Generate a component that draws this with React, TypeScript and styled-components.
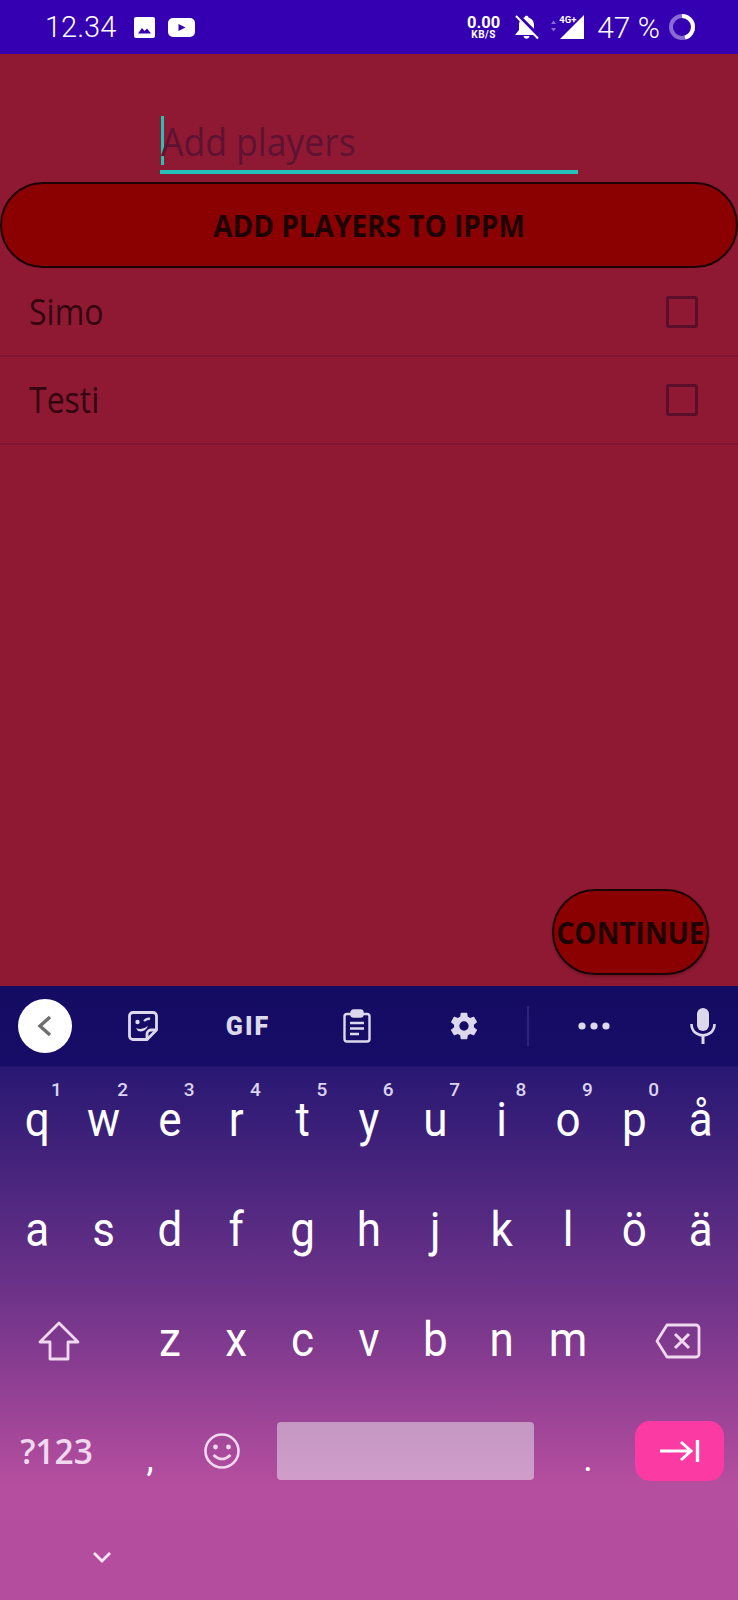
import React from "react";
import styled, { createGlobalStyle } from "styled-components";

const GlobalStyle = createGlobalStyle`
  html, body {
    margin: 0;
    padding: 0;
    background: #8f1933;
  }
  * {
    box-sizing: border-box;
  }
`;

const Screen = styled.div`
  width: 738px;
  height: 1600px;
  display: flex;
  flex-direction: column;
  overflow: hidden;
  font-family: "Open Sans", sans-serif;
`;

/* status bar */
const StatusBar = styled.div`
  height: 54px;
  flex: none;
  display: flex;
  align-items: center;
  padding: 0 42px 0 45px;
  background: #3500b1;
  color: #fff;
`;
const Clock = styled.span`
  font: 300 29px Roboto, sans-serif;
  margin-right: 18px;
`;
const StatusIcon = styled.svg`
  display: block;
  flex: none;
`;
const YoutubeIcon = styled(StatusIcon)`
  margin-left: 13px;
`;
const StatusRight = styled.div`
  margin-left: auto;
  display: flex;
  align-items: center;
`;
const Speed = styled.div`
  display: flex;
  flex-direction: column;
  align-items: center;
  font-family: Roboto, sans-serif;
  font-weight: 700;
  margin-right: 14px;
`;
const SpeedValue = styled.span`
  font-size: 16.5px;
  line-height: 15px;
`;
const SpeedUnit = styled.span`
  font-size: 10px;
  line-height: 10px;
  letter-spacing: 0.5px;
`;
const Network = styled.div`
  position: relative;
  width: 36px;
  height: 24px;
  margin: 0 13px 0 9px;
`;
const NetworkLabel = styled.span`
  position: absolute;
  left: 11px;
  top: -1px;
  font: 700 9.5px Roboto, sans-serif;
`;
const Battery = styled.span`
  font: 300 30px Roboto, sans-serif;
  margin-right: 8px;
`;

/* app content */
const Main = styled.main`
  flex: 1;
  display: flex;
  flex-direction: column;
  background: #8f1933;
`;
const InputWrap = styled.div`
  height: 62px;
  width: 418px;
  margin: 58px 0 0 160px;
  padding-left: 1px;
  border-bottom: 4px solid #24c2ba;
  display: flex;
  align-items: center;
  position: relative;
`;
const Caret = styled.i`
  position: absolute;
  left: 1px;
  top: 4px;
  width: 3px;
  height: 49px;
  background: #24c2ba;
`;
const Placeholder = styled.span`
  color: #5e1231;
  font-size: 35.5px;
  display: block;
  transform: scaleY(1.06);
`;
const Pill = styled.button<{ $wide?: boolean }>`
  display: flex;
  align-items: center;
  justify-content: center;
  height: 86px;
  width: ${(p) => (p.$wide ? "738px" : "157px")};
  padding: 0;
  border: 2px solid #1a0205;
  border-radius: 43px;
  background: #8b0000;
  color: #1d0205;
  font-family: "Open Sans", sans-serif;
  font-weight: 700;
  font-size: 28px;
  box-shadow: ${(p) => (p.$wide ? "none" : "0 2px 3px rgba(0,0,0,0.2)")};
`;
const PillText = styled.span`
  display: block;
  transform: scaleY(1.08);
`;
const AddButton = styled(Pill)`
  margin: 8px 0 1px;
  flex: none;
`;
const PlayerList = styled.ul`
  list-style: none;
  margin: 0;
  padding: 0;
`;
const PlayerRow = styled.li`
  height: 88px;
  display: flex;
  align-items: center;
  justify-content: space-between;
  padding: 0 40px 0 29px;
  border-bottom: 2px solid #7f142e;
`;
const PlayerName = styled.span`
  font-size: 32px;
  color: #33050f;
  display: block;
  margin-bottom: 3px;
  transform: scaleY(1.12);
`;
const Checkbox = styled.span`
  width: 32px;
  height: 32px;
  border: 3px solid #5a0e29;
  border-radius: 3px;
`;
const Footer = styled.div`
  margin-top: auto;
  padding: 0 29px 11px 0;
  display: flex;
  justify-content: flex-end;
`;

/* keyboard */
const Keyboard = styled.div`
  height: 614px;
  flex: none;
  display: flex;
  flex-direction: column;
  background: linear-gradient(180deg, #140b62 0, #170d68 80px, #281873 81px, #6e3389 310px, #b64e9f 500px, #b44d9e 100%);
`;
const Toolbar = styled.div`
  height: 80px;
  flex: none;
  display: grid;
  grid-template-columns: 90px 106px 104px 114px 100px 28px 104px 1fr;
  align-items: center;
  color: #dcd9ec;
`;
const ToolSlot = styled.div<{ $end?: boolean }>`
  display: flex;
  align-items: center;
  justify-content: ${(p) => (p.$end ? "flex-end" : "center")};
  padding-right: ${(p) => (p.$end ? "22px" : "0")};
`;
const BackCircle = styled.div`
  width: 54px;
  height: 54px;
  border-radius: 50%;
  background: #fff;
  display: flex;
  align-items: center;
  justify-content: center;
`;
const GifLabel = styled.span`
  font: 900 25px Roboto, sans-serif;
  letter-spacing: 2px;
`;
const Divider = styled.div`
  width: 2px;
  height: 40px;
  margin: 0 auto;
  background: #2c2478;
`;
const KeyRow = styled.div`
  height: 110px;
  flex: none;
  display: grid;
  grid-template-columns: repeat(11, 66.36px);
  padding-left: 4px;
`;
const Key = styled.div`
  position: relative;
  display: flex;
  align-items: center;
  justify-content: center;
  color: #fff;
  font: 400 44px/44px Roboto, sans-serif;
`;
const KeyGlyph = styled.span`
  display: block;
  margin-top: -2px;
  transform: scaleY(1.08);
`;
const Hint = styled.span`
  position: absolute;
  left: 47px;
  top: 14px;
  font: 500 19px/19px Roboto, sans-serif;
  color: #dcd4f0;
`;
const ShiftKey = styled.div`
  grid-column: span 2;
  display: flex;
  align-items: center;
  padding-left: 34px;
`;
const BackspaceKey = styled.div`
  grid-column: 10 / span 2;
  display: flex;
  align-items: center;
  justify-content: flex-end;
  padding-right: 33px;
`;
const BottomRow = styled.div`
  height: 110px;
  flex: none;
  display: flex;
  align-items: center;
  color: #fff;
`;
const SymbolsKey = styled.div`
  width: 113px;
  text-align: center;
  font: 600 33.5px "Open Sans", sans-serif;
  color: #f0d9ee;
`;
const PunctKey = styled.div<{ $w: number; $shift?: number }>`
  width: ${(p) => p.$w}px;
  text-align: center;
  font: 400 36px/42px Roboto, sans-serif;
  padding: 16px 0 0 ${(p) => p.$shift ?? 0}px;
`;
const EmojiKey = styled.div`
  width: 90px;
  padding-right: 20px;
  display: flex;
  justify-content: center;
`;
const SpaceBar = styled.div`
  width: 257px;
  height: 58px;
  border-radius: 4px;
  background: linear-gradient(180deg, #c597c3, #d09dca);
`;
const ActionKey = styled.div`
  width: 89px;
  height: 60px;
  border-radius: 15px;
  background: #fb3aa4;
  display: flex;
  align-items: center;
  justify-content: center;
`;
const NavRow = styled.div`
  flex: 1;
  padding: 40px 0 0 93px;
`;

const rowOne = [
  ["q", "1"], ["w", "2"], ["e", "3"], ["r", "4"], ["t", "5"], ["y", "6"],
  ["u", "7"], ["i", "8"], ["o", "9"], ["p", "0"], ["å", ""],
];
const rowTwo = ["a", "s", "d", "f", "g", "h", "j", "k", "l", "ö", "ä"];
const rowThree = ["z", "x", "c", "v", "b", "n", "m"];

const App = () => {
  return (
    <Screen>
      <GlobalStyle />
      <StatusBar>
        <Clock>12.34</Clock>
        <StatusIcon width="21" height="21" viewBox="0 0 21 21">
          <rect width="21" height="21" rx="2" fill="#fff" />
          <path d="M4 16.5 L8 11 L10.5 14 L13 11.5 L17 16.5 Z" fill="#3500b1" />
        </StatusIcon>
        <YoutubeIcon width="27" height="19" viewBox="0 0 27 19">
          <rect width="27" height="19" rx="5" fill="#fff" />
          <path d="M10.5 6 L17.5 9.5 L10.5 13 Z" fill="#3500b1" />
        </YoutubeIcon>
        <StatusRight>
          <Speed>
            <SpeedValue>0.00</SpeedValue>
            <SpeedUnit>KB/S</SpeedUnit>
          </Speed>
          <StatusIcon width="25" height="25" viewBox="0 0 25 25">
            <path d="M5 10 C5 5 8.5 3 10.5 2.6 C10.5 0 14.5 0 14.5 2.6 C17.5 3.4 20 6 20 10 L20 15 L24 20 L1 20 L5 15 Z" fill="#fff" />
            <path d="M9.5 21 H15.5 C15 24.5 10 24.5 9.5 21 Z" fill="#fff" />
            <path d="M3 0 L25 22" stroke="#3500b1" strokeWidth="4.5" />
            <path d="M2 1 L24 23.5" stroke="#fff" strokeWidth="2" />
          </StatusIcon>
          <Network>
            <NetworkLabel>4G+</NetworkLabel>
            <StatusIcon width="36" height="24" viewBox="0 0 36 24">
              <path d="M3 9 L5.5 5.5 L8 9 Z M3 13 L8 13 L5.5 16.5 Z" fill="#8a6bd6" />
              <path d="M36 0 V24 H12 Z" fill="#fff" />
            </StatusIcon>
          </Network>
          <Battery>47 %</Battery>
          <StatusIcon width="28" height="28" viewBox="0 0 28 28">
            <circle cx="14" cy="14" r="11" fill="none" stroke="#8a6bd6" strokeWidth="4" />
            <path d="M14 3 A11 11 0 0 1 17 24.6" fill="none" stroke="#fff" strokeWidth="4" />
          </StatusIcon>
        </StatusRight>
      </StatusBar>

      <Main>
        <InputWrap>
          <Caret />
          <Placeholder>Add players</Placeholder>
        </InputWrap>
        <AddButton $wide>
          <PillText>ADD PLAYERS TO IPPM</PillText>
        </AddButton>
        <PlayerList>
          <PlayerRow>
            <PlayerName>Simo</PlayerName>
            <Checkbox />
          </PlayerRow>
          <PlayerRow>
            <PlayerName>Testi</PlayerName>
            <Checkbox />
          </PlayerRow>
        </PlayerList>
        <Footer>
          <Pill>
            <PillText>CONTINUE</PillText>
          </Pill>
        </Footer>
      </Main>

      <Keyboard>
        <Toolbar>
          <ToolSlot>
            <BackCircle>
              <svg width="16" height="24" viewBox="0 0 16 24">
                <path d="M13 3 L3 12 L13 21" fill="none" stroke="#6f6f6f" strokeWidth="3.4" />
              </svg>
            </BackCircle>
          </ToolSlot>
          <ToolSlot>
            <svg width="30" height="30" viewBox="0 0 30 30" fill="none" stroke="currentColor">
              <path d="M5 1.5 H25 A3.5 3.5 0 0 1 28.5 5 V19 L19 28.5 H5 A3.5 3.5 0 0 1 1.5 25 V5 A3.5 3.5 0 0 1 5 1.5 Z" strokeWidth="2.8" />
              <path d="M19 28 V23 A4 4 0 0 1 23 19 H28" strokeWidth="2.8" />
              <circle cx="9.5" cy="11" r="2.2" fill="currentColor" stroke="none" />
              <path d="M16 10 Q19 7 22 8" strokeWidth="2.4" />
              <path d="M8 17 Q14 19.5 20 15 Q17 22 10 20 Z" fill="currentColor" stroke="none" />
            </svg>
          </ToolSlot>
          <ToolSlot>
            <GifLabel>GIF</GifLabel>
          </ToolSlot>
          <ToolSlot>
            <svg width="28" height="34" viewBox="0 0 28 34" fill="none" stroke="currentColor" strokeWidth="2.4">
              <rect x="1.5" y="5" width="25" height="27.5" rx="2.5" />
              <rect x="8.5" y="1.5" width="11" height="6" rx="2" fill="currentColor" />
              <path d="M7 14 H21 M7 19.5 H21 M7 25 H16" strokeWidth="2.6" />
            </svg>
          </ToolSlot>
          <ToolSlot>
            <svg width="32" height="32" viewBox="0 0 24 24" fill="currentColor">
              <path fillRule="evenodd" d="M19.4 13c.04-.33.07-.66.07-1s-.03-.67-.07-1l2.1-1.65c.2-.15.25-.42.13-.64l-2-3.46c-.12-.22-.39-.3-.61-.22l-2.49 1c-.52-.4-1.08-.73-1.69-.98l-.38-2.65C14.46 2.18 14.25 2 14 2h-4c-.25 0-.46.18-.49.42l-.38 2.65c-.61.25-1.17.59-1.69.98l-2.49-1c-.23-.09-.49 0-.61.22l-2 3.46c-.13.22-.07.49.12.64L4.57 11c-.04.33-.07.67-.07 1s.03.67.07 1l-2.11 1.65c-.19.15-.24.42-.12.64l2 3.46c.12.22.39.3.61.22l2.49-1c.52.4 1.08.73 1.69.98l.38 2.65c.03.24.24.42.49.42h4c.25 0 .46-.18.49-.42l.38-2.65c.61-.25 1.17-.59 1.69-.98l2.49 1c.23.09.49 0 .61-.22l2-3.46c.12-.22.07-.49-.12-.64L19.4 13zM12 15.5a3.5 3.5 0 1 1 0-7 3.5 3.5 0 0 1 0 7z" />
            </svg>
          </ToolSlot>
          <Divider />
          <ToolSlot>
            <svg width="32" height="8" viewBox="0 0 32 8" fill="currentColor">
              <circle cx="4" cy="4" r="3.6" />
              <circle cx="16" cy="4" r="3.6" />
              <circle cx="28" cy="4" r="3.6" />
            </svg>
          </ToolSlot>
          <ToolSlot $end>
            <svg width="26" height="36" viewBox="0 0 26 36" fill="currentColor">
              <rect x="7" y="0" width="12" height="23" rx="6" />
              <path d="M1.5 16 C1.5 31 24.5 31 24.5 16" fill="none" stroke="currentColor" strokeWidth="2.6" />
              <rect x="11.5" y="27" width="3" height="9" />
            </svg>
          </ToolSlot>
        </Toolbar>

        <KeyRow>
          {rowOne.map(([letter, hint]) => (
            <Key key={letter}>
              <KeyGlyph>{letter}</KeyGlyph>
              {hint && <Hint>{hint}</Hint>}
            </Key>
          ))}
        </KeyRow>
        <KeyRow>
          {rowTwo.map((letter) => (
            <Key key={letter}>
              <KeyGlyph>{letter}</KeyGlyph>
            </Key>
          ))}
        </KeyRow>
        <KeyRow>
          <ShiftKey>
            <svg width="42" height="40" viewBox="0 0 42 40" fill="none" stroke="#f0d9ee" strokeWidth="2.8" strokeLinejoin="round">
              <path d="M21 2 L40 21 L30 21 L30 38 L12 38 L12 21 L2 21 Z" />
            </svg>
          </ShiftKey>
          {rowThree.map((letter) => (
            <Key key={letter}>
              <KeyGlyph>{letter}</KeyGlyph>
            </Key>
          ))}
          <BackspaceKey>
            <svg width="46" height="36" viewBox="0 0 46 36" fill="none" stroke="#f0d9ee" strokeWidth="2.8" strokeLinejoin="round">
              <path d="M12 2 H41 A3 3 0 0 1 44 5 V31 A3 3 0 0 1 41 34 H12 L2 18 Z" />
              <path d="M20 11 L34 25 M34 11 L20 25" strokeWidth="3" />
            </svg>
          </BackspaceKey>
        </KeyRow>
        <BottomRow>
          <SymbolsKey>?123</SymbolsKey>
          <PunctKey $w={74}>,</PunctKey>
          <EmojiKey>
            <svg width="38" height="38" viewBox="0 0 38 38" fill="none" stroke="#f0d9ee" strokeWidth="2.6">
              <circle cx="19" cy="19" r="16.5" />
              <circle cx="12.5" cy="15" r="2.4" fill="#f0d9ee" stroke="none" />
              <circle cx="25.5" cy="15" r="2.4" fill="#f0d9ee" stroke="none" />
              <path d="M10.5 23 Q19 31 27.5 23" />
            </svg>
          </EmojiKey>
          <SpaceBar />
          <PunctKey $w={101} $shift={7}>.</PunctKey>
          <ActionKey>
            <svg width="40" height="24" viewBox="0 0 40 24" fill="none" stroke="#fff" strokeWidth="3">
              <path d="M0 12 H31 M21 3 L31 12 L21 21" />
              <path d="M37.5 1 V23" strokeWidth="3.4" />
            </svg>
          </ActionKey>
        </BottomRow>
        <NavRow>
          <svg width="18" height="12" viewBox="0 0 18 12" fill="none" stroke="#f6e6f3" strokeWidth="2.8">
            <path d="M1 2 L9 10 L17 2" />
          </svg>
        </NavRow>
      </Keyboard>
    </Screen>
  );
};

export default App;
